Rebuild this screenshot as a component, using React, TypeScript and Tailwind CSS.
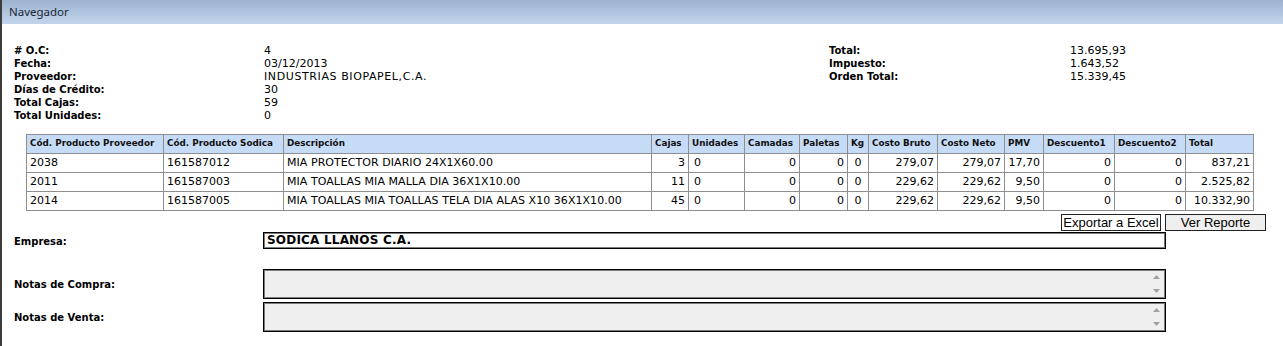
import React from 'react';

const rows = [
  { prov: '2038', sod: '161587012', desc: 'MIA PROTECTOR DIARIO 24X1X60.00', cajas: '3', bruto: '279,07', neto: '279,07', pmv: '17,70', total: '837,21' },
  { prov: '2011', sod: '161587003', desc: 'MIA TOALLAS MIA MALLA DIA 36X1X10.00', cajas: '11', bruto: '229,62', neto: '229,62', pmv: '9,50', total: '2.525,82' },
  { prov: '2014', sod: '161587005', desc: 'MIA TOALLAS MIA TOALLAS TELA DIA ALAS X10 36X1X10.00', cajas: '45', bruto: '229,62', neto: '229,62', pmv: '9,50', total: '10.332,90' },
];

const headers = [
  { label: 'Cód. Producto Proveedor', w: 'w-[137px]' },
  { label: 'Cód. Producto Sodica', w: 'w-[120px]' },
  { label: 'Descripción', w: 'w-[368px]' },
  { label: 'Cajas', w: 'w-[37px]' },
  { label: 'Unidades', w: 'w-[56px]' },
  { label: 'Camadas', w: 'w-[55px]' },
  { label: 'Paletas', w: 'w-[48px]' },
  { label: 'Kg', w: 'w-[21px]' },
  { label: 'Costo Bruto', w: 'w-[69px]' },
  { label: 'Costo Neto', w: 'w-[67px]' },
  { label: 'PMV', w: 'w-[39px]' },
  { label: 'Descuento1', w: 'w-[71px]' },
  { label: 'Descuento2', w: 'w-[71px]' },
  { label: 'Total', w: 'w-[68px]' },
];

const td = 'border border-[#8e8e8e] h-[19px] px-[3px] py-0 whitespace-nowrap';

function Scroller() {
  return (
    <div className="absolute right-[4px] top-[4px] bottom-[4px] flex flex-col justify-between">
      <svg width="9" height="6" viewBox="0 0 9 6"><path d="M4.5 1 L8 5 L1 5 Z" fill="#a0a0a0" /></svg>
      <svg width="9" height="6" viewBox="0 0 9 6"><path d="M1 1 L8 1 L4.5 5 Z" fill="#a0a0a0" /></svg>
    </div>
  );
}

export default function App() {
  const val = "font-['DejaVu_Sans',sans-serif] text-[11px] text-black";
  const lbl = "font-['DejaVu_Sans',sans-serif] text-[10px] font-bold text-black";
  const box = 'border border-black shadow-[inset_0_0_0_1px_#7c7c7c]';
  return (
    <div className="w-[1283px] h-[346px] bg-white overflow-hidden border-l-2 border-[#3c3c3c]">
      <div className="h-[24px] flex items-center pl-[7px] bg-gradient-to-b from-[#9cb3cf] to-[#c2d5eb]">
        <span className="font-['Noto_Sans',sans-serif] text-[11.5px] text-[#1b2636]">Navegador</span>
      </div>

      <div className="pt-[20px] pl-[12px] grid grid-cols-[250px_565px_241px_1fr] leading-[13px]">
        <div className={lbl}>
          <div># O.C:</div>
          <div>Fecha:</div>
          <div>Proveedor:</div>
          <div>Días de Crédito:</div>
          <div>Total Cajas:</div>
          <div>Total Unidades:</div>
        </div>
        <div className={val}>
          <div>4</div>
          <div>03/12/2013</div>
          <div className="tracking-[0.6px]">INDUSTRIAS BIOPAPEL,C.A.</div>
          <div>30</div>
          <div>59</div>
          <div>0</div>
        </div>
        <div className={lbl}>
          <div>Total:</div>
          <div>Impuesto:</div>
          <div>Orden Total:</div>
        </div>
        <div className={val}>
          <div>13.695,93</div>
          <div>1.643,52</div>
          <div>15.339,45</div>
        </div>
      </div>

      <div className="pl-[24px] mt-[12px]">
        <table className="table-fixed border-collapse w-[1227px]">
          <thead>
            <tr className="bg-[#c6dbf6]">
              {headers.map((h) => (
                <th key={h.label} className={`${td} ${h.w} text-left font-['DejaVu_Sans',sans-serif] text-[8.8px] font-bold text-[#111]`}>
                  {h.label}
                </th>
              ))}
            </tr>
          </thead>
          <tbody className="font-['DejaVu_Sans',sans-serif] text-[11px] text-black">
            {rows.map((r) => (
              <tr key={r.prov}>
                <td className={td}>{r.prov}</td>
                <td className={td}>{r.sod}</td>
                <td className={`${td} tracking-[0.05px]`}>{r.desc}</td>
                <td className={`${td} text-right`}>{r.cajas}</td>
                <td className={`${td} text-left pl-[5px]`}>0</td>
                <td className={`${td} text-right`}>0</td>
                <td className={`${td} text-right`}>0</td>
                <td className={`${td} text-center`}>0</td>
                <td className={`${td} text-right`}>{r.bruto}</td>
                <td className={`${td} text-right`}>{r.neto}</td>
                <td className={`${td} text-right`}>{r.pmv}</td>
                <td className={`${td} text-right`}>0</td>
                <td className={`${td} text-right`}>0</td>
                <td className={`${td} text-right`}>{r.total}</td>
              </tr>
            ))}
          </tbody>
        </table>
      </div>

      <div className="flex justify-end gap-[4px] pr-[17px] mt-[3px] font-['Liberation_Sans',sans-serif] text-[13px] text-black leading-none">
        <button className="w-[100px] h-[17px] bg-white border border-[#222] flex items-center justify-center">Exportar a Excel</button>
        <button className="w-[101px] h-[17px] bg-[#efefef] border border-[#222] flex items-center justify-center">Ver Reporte</button>
      </div>

      <div className="pl-[12px] grid grid-cols-[249px_903px] items-center">
        <div className={`${lbl} pt-[3px]`}>Empresa:</div>
        <div className={`h-[17px] ${box} flex items-center px-[3px] font-['DejaVu_Sans',sans-serif] text-[12px] tracking-[0.2px] font-bold text-black`}>
          SODICA LLANOS C.A.
        </div>
      </div>

      <div className="pl-[12px] mt-[20px] grid grid-cols-[249px_903px] gap-y-[3px] items-center">
        <div className={lbl}>Notas de Compra:</div>
        <div className={`relative h-[30px] ${box} bg-[#efefef]`}>
          <Scroller />
        </div>
        <div className={lbl}>Notas de Venta:</div>
        <div className={`relative h-[30px] ${box} bg-[#efefef]`}>
          <Scroller />
        </div>
      </div>
    </div>
  );
}
